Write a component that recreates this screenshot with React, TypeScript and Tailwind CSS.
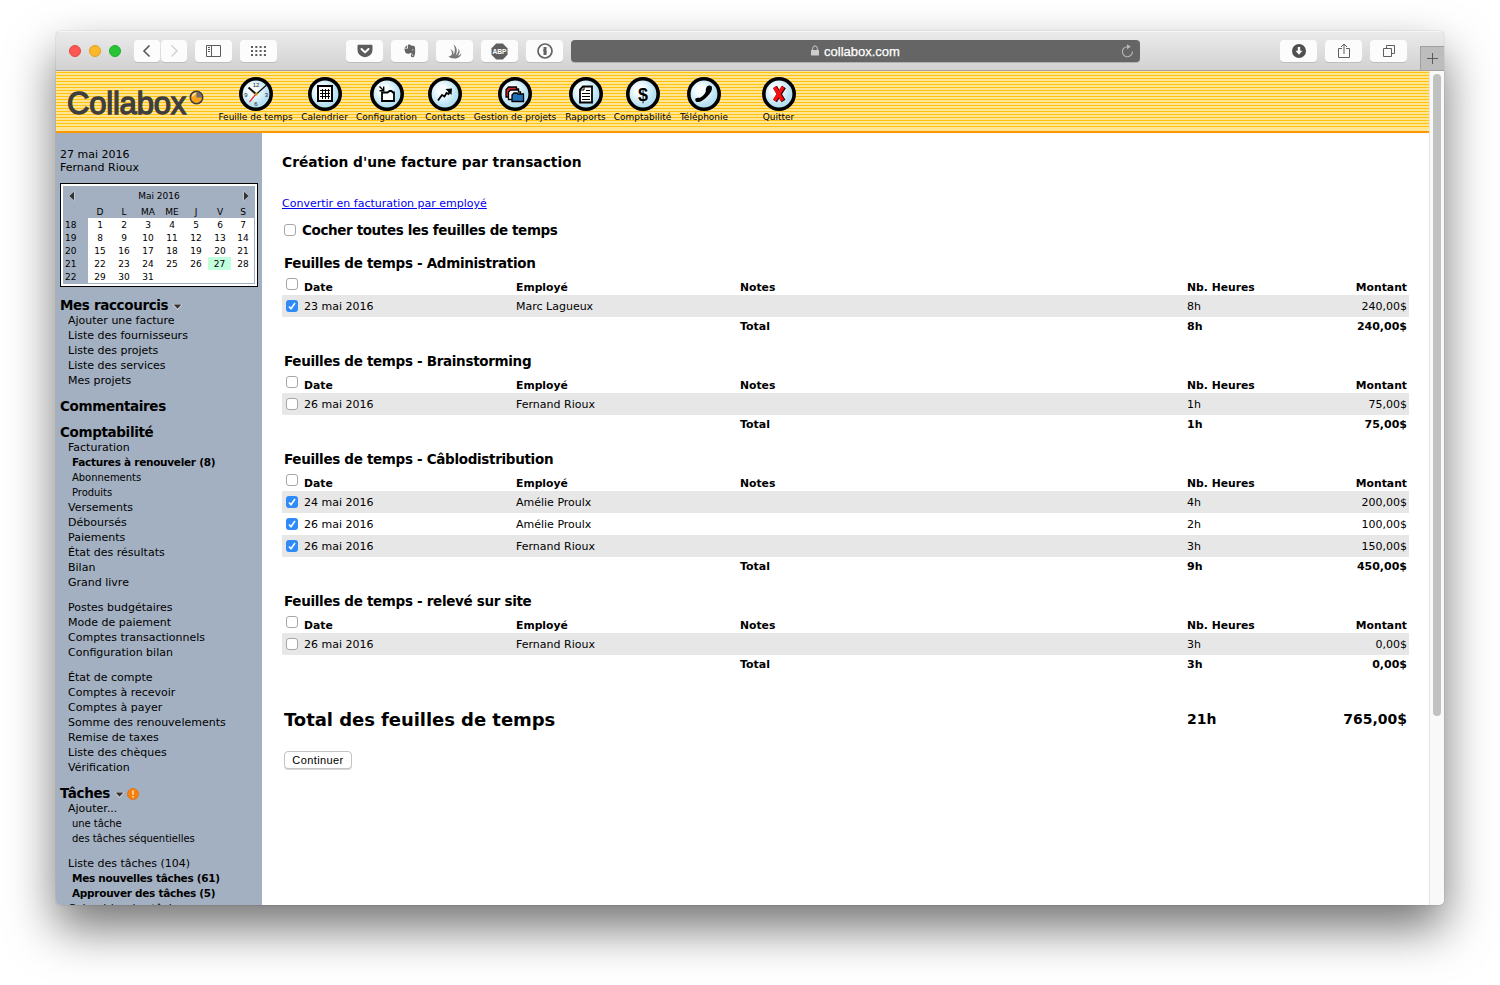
import { Fragment, ReactNode } from "react";

type SideItem = { label: string, level?: number, bold?: boolean, gap?: boolean }

type SideSection = { title: string, arrow?: boolean, alert?: boolean, items: SideItem[] }

type Entry = { date: string, employee: string, hours: string, amount: string, checked?: boolean }

type Sheet = { name: string, entries: Entry[], hours: string, amount: string }

const sections: SideSection[] = [
    {
        title: "Mes raccourcis", arrow: true, items: [
            { label: "Ajouter une facture" },
            { label: "Liste des fournisseurs" },
            { label: "Liste des projets" },
            { label: "Liste des services" },
            { label: "Mes projets" },
        ]
    },
    { title: "Commentaires", items: [] },
    {
        title: "Comptabilité", items: [
            { label: "Facturation" },
            { label: "Factures à renouveler (8)", level: 1, bold: true },
            { label: "Abonnements", level: 1 },
            { label: "Produits", level: 1 },
            { label: "Versements" },
            { label: "Déboursés" },
            { label: "Paiements" },
            { label: "État des résultats" },
            { label: "Bilan" },
            { label: "Grand livre" },
            { label: "Postes budgétaires", gap: true },
            { label: "Mode de paiement" },
            { label: "Comptes transactionnels" },
            { label: "Configuration bilan" },
            { label: "État de compte", gap: true },
            { label: "Comptes à recevoir" },
            { label: "Comptes à payer" },
            { label: "Somme des renouvelements" },
            { label: "Remise de taxes" },
            { label: "Liste des chèques" },
            { label: "Vérification" },
        ]
    },
    {
        title: "Tâches", arrow: true, alert: true, items: [
            { label: "Ajouter..." },
            { label: "une tâche", level: 1 },
            { label: "des tâches séquentielles", level: 1 },
            { label: "Liste des tâches (104)", gap: true },
            { label: "Mes nouvelles tâches (61)", level: 1, bold: true },
            { label: "Approuver des tâches (5)", level: 1, bold: true },
            { label: "Calendrier des tâches" },
        ]
    },
]

const sheets: Sheet[] = [
    {
        name: "Administration", hours: "8h", amount: "240,00$",
        entries: [{ date: "23 mai 2016", employee: "Marc Lagueux", hours: "8h", amount: "240,00$", checked: true }]
    },
    {
        name: "Brainstorming", hours: "1h", amount: "75,00$",
        entries: [{ date: "26 mai 2016", employee: "Fernand Rioux", hours: "1h", amount: "75,00$" }]
    },
    {
        name: "Câblodistribution", hours: "9h", amount: "450,00$",
        entries: [
            { date: "24 mai 2016", employee: "Amélie Proulx", hours: "4h", amount: "200,00$", checked: true },
            { date: "26 mai 2016", employee: "Amélie Proulx", hours: "2h", amount: "100,00$", checked: true },
            { date: "26 mai 2016", employee: "Fernand Rioux", hours: "3h", amount: "150,00$", checked: true },
        ]
    },
    {
        name: "relevé sur site", hours: "3h", amount: "0,00$",
        entries: [{ date: "26 mai 2016", employee: "Fernand Rioux", hours: "3h", amount: "0,00$" }]
    },
]

const weeks = [
    ["18", "1", "2", "3", "4", "5", "6", "7"],
    ["19", "8", "9", "10", "11", "12", "13", "14"],
    ["20", "15", "16", "17", "18", "19", "20", "21"],
    ["21", "22", "23", "24", "25", "26", "27", "28"],
    ["22", "29", "30", "31", "", "", "", ""],
]

const ToolButton = ({ className, children }: { className: string, children?: ReactNode }) => (
    <div className={`flex h-[22px] shrink-0 items-center justify-center rounded-[4px] bg-[#fcfcfc] shadow-[0_1px_0_#bdbdbd] ${className}`}>
        {children}
    </div>
)

const BrowserBar = () => (
    <div className="relative flex h-10 shrink-0 border-b border-[#a0a0a0] bg-linear-to-b from-[#ebebeb] to-[#d2d2d2] pt-[9px] shadow-[inset_0_1px_0_#f6f6f6]">
        <div className="ml-[13px] flex h-[22px] gap-2 items-center">
            <div className="size-3 rounded-full border border-[#e2463f] bg-[#fc5753]" />
            <div className="size-3 rounded-full border border-[#dfa023] bg-[#fdb827]" />
            <div className="size-3 rounded-full border border-[#1dad2b] bg-[#27c534]" />
        </div>
        <ToolButton className="ml-[13px] w-[26px]">
            <svg width="10" height="14" viewBox="0 0 10 14" fill="none" stroke="#555" strokeWidth="1.6"><path d="M7.5 1.5 2 7l5.5 5.5" /></svg>
        </ToolButton>
        <ToolButton className="ml-px w-[26px]">
            <svg width="10" height="14" viewBox="0 0 10 14" fill="none" stroke="#cfcfcf" strokeWidth="1.4"><path d="M2.5 1.5 8 7l-5.5 5.5" /></svg>
        </ToolButton>
        <ToolButton className="ml-2 w-[37px]">
            <svg width="15" height="12" viewBox="0 0 15 12" fill="none" stroke="#5a5a5a">
                <path d="M.5.5h14v11H.5zM5.5.5v11M2 2.500h2M2 4.500h2M2 6.500h2" />
            </svg>
        </ToolButton>
        <ToolButton className="ml-2 w-[37px]">
            <svg width="15" height="10" viewBox="0 0 15 10" fill="none" stroke="#5a5a5a" strokeWidth="2" strokeDasharray="2 2.300">
                <path d="M0 1h15M0 5h15M0 9h15" />
            </svg>
        </ToolButton>
        <ToolButton className="ml-[69px] w-[37px]">
            <svg width="16" height="14" viewBox="0 0 16 14">
                <path d="M1.6.8h12.8c.6 0 1.1.5 1.1 1.1V6a7.5 7.2 0 0 1-15 0V1.900c0-.6.5-1.100 1.100-1.100z" fill="#5c5c5c" />
                <path d="m4.500 5 3.500 3.400L11.500 5" fill="none" stroke="#fff" strokeWidth="2" strokeLinecap="round" strokeLinejoin="round" />
            </svg>
        </ToolButton>
        <ToolButton className="ml-2 w-[37px]">
            <svg width="12" height="14" viewBox="0 0 12 14" fill="#636363">
                <path d="M3.200 1v2.700H.5zM4 .8c1.500-.6 2.600 0 3 .6 2 .2 3.500.3 3.800 1.300.6 3 .6 7.300-.5 9.500-.5 1.200-2.500 1.200-3.200.4-.6-1-.3-2.400.8-2.700l.8.2v1.200c-.9 0-.7.7-.1.700 1 0 .9-2-.1-2.300-.9-.3-1.600-.2-1.900-.8-.8 1-3.500 1-4.600.3C1 8.200.4 5.400.5 4.500H4z" />
                <path d="M8 5.600c.9-.3 1.600.1 1.600.8-.5-.2-1-.3-1.600-.1z" fill="#fcfcfc" />
            </svg>
        </ToolButton>
        <ToolButton className="ml-2 w-[37px]">
            <svg width="14" height="15" viewBox="0 0 14 15" fill="#777">
                <path d="M.5 12C3 12.500 4 11 4 9 4 7 2.500 5.500 1.500 5 5 6 6 8 5.500 11 7 9 7.500 4 5.500.5 9.500 3 9.500 8 7.500 11.500 9.500 10 11 7.500 10.500 4.500c2 2.500 1 5.500-1 7.500 1.500-.5 3-1.500 4-3-.5 3-2.500 5.500-7 5.500C3.500 14.500 1.500 13.700.5 12z" />
            </svg>
        </ToolButton>
        <ToolButton className="ml-2 w-[37px]">
            <svg width="17" height="17" viewBox="0 0 17 17">
                <path d="M5.200.5h6.600l4.700 4.700v6.600l-4.700 4.700H5.200L.5 11.800V5.200z" fill="#5f5f5f" />
                <text x="8.500" y="11.400" textAnchor="middle" fill="#fff" fontSize="7.500" fontWeight="700" fontFamily="Liberation Sans, sans-serif" textLength="14" lengthAdjust="spacingAndGlyphs">ABP</text>
            </svg>
        </ToolButton>
        <ToolButton className="ml-2 w-[37px]">
            <svg width="16" height="16" viewBox="0 0 16 16" fill="none" stroke="#636363">
                <circle cx="8" cy="8" r="7" strokeWidth="1.700" />
                <path d="M8 4v8" strokeWidth="3" />
                <path d="M6 7.500h1M9 9h1" strokeWidth="1" />
            </svg>
        </ToolButton>
        <div className="relative ml-2 flex h-[22px] w-[569px] shrink-0 items-center justify-center gap-[5px] rounded-[4px] bg-[#656565] pt-px font-['Liberation_Sans',sans-serif] text-[13px] text-white shadow-[0_1px_0_#b0b0b0]">
            <svg className="-mt-0.5" width="8" height="11" viewBox="0 0 8 11"><path d="M0 5h8v5.500H0z" fill="#ccc" /><path d="M1.700 5V3.200a2.300 2.300 0 0 1 4.600 0V5" fill="none" stroke="#ccc" /></svg>
            <span className="[-webkit-text-stroke:0.250px_white]">collabox.com</span>
            <svg className="absolute right-1.5 top-[4px]" width="13" height="14" viewBox="0 0 13 14">
                <path d="M11.400 7.500A5 5 0 1 1 6.400 2.700" fill="none" stroke="#b9b9b9" strokeWidth="1.100" />
                <path d="M6 .3 9.800 2.800 6 5.200z" fill="#b9b9b9" />
            </svg>
        </div>
        <ToolButton className="ml-[140px] w-[37px]">
            <svg width="14" height="14" viewBox="0 0 14 14">
                <circle cx="7" cy="7" r="7" fill="#4f4f4f" />
                <path d="M5.800 3h2.400v3.700h2.300L7 10.700 3.500 6.700h2.300z" fill="#fff" />
            </svg>
        </ToolButton>
        <ToolButton className="ml-2 w-[37px]">
            <svg width="12" height="16" viewBox="0 0 12 16" fill="none" stroke="#5f5f5f">
                <path d="M4 5.500H.5v9h11v-9H8M6 11V1M3 4l3-3 3 3" />
            </svg>
        </ToolButton>
        <ToolButton className="ml-2 w-[37px]">
            <svg width="12" height="12" viewBox="0 0 12 12" fill="none" stroke="#5f5f5f">
                <path d="M.5 3.500h8v8h-8zM3.500 3.500v-3h8v8h-3" />
            </svg>
        </ToolButton>
        <div className="absolute bottom-[-1px] right-0 flex h-[25px] w-6 items-center justify-center border-l border-y border-[#a0a0a0] bg-[#bdbdbd]">
            <svg width="11" height="11" viewBox="0 0 11 11" stroke="#5a5a5a"><path d="M5.500 0v11M0 5.500h11" /></svg>
        </div>
    </div>
)

const Disc = ({ children }: { children: ReactNode }) => (
    <svg className="shrink-0" width="34" height="34" viewBox="0 0 34 34">
        <defs>
            <radialGradient id="disc" cx="40%" cy="38%">
                <stop offset="0.300" stopColor="#f8fdff" />
                <stop offset="1" stopColor="#b5e1f3" />
            </radialGradient>
        </defs>
        <circle cx="17" cy="17" r="15.200" fill="url(#disc)" stroke="#000" strokeWidth="3.600" />
        {children}
    </svg>
)

const menu = [
    {
        label: "Feuille de temps", width: "w-[75px]", icon: <>
            <g fontSize="6" fill="#222" fontFamily="Liberation Sans, sans-serif" textAnchor="middle">
                <text x="17" y="10">12</text><text x="27.500" y="19.500">3</text><text x="17" y="29">6</text><text x="6.800" y="19.500">9</text>
            </g>
            <path d="M17 17 10.500 25" stroke="#e33" strokeWidth="1.300" />
            <path d="M17.500 17.500 9.500 10.500" stroke="#111" strokeWidth="2" />
            <path d="M17 17.500 27.500 8" stroke="#111" strokeWidth="1.200" />
            <circle cx="17.300" cy="17" r="1.500" fill="#c90" />
        </>
    },
    {
        label: "Calendrier", width: "w-[47px]", icon: <>
            <path d="M10 9h14v15H10z" fill="#fff" stroke="#000" strokeWidth="2" />
            <path d="M14.500 12v10M17.500 12v10M20.500 12v10M12 13.500h10M12 16.500h10M12 19.500h10" fill="none" stroke="#000" />
        </>
    },
    {
        label: "Configuration", width: "w-[61px]", icon: <>
            <path d="M12 15.500h5.500l2-1.500h2l1.500 1.500h1V24H12z" fill="#fff" stroke="#000" strokeWidth="1.800" />
            <path d="m9.500 9.500 4 4M13.700 9.500v4.300h-4.200" fill="none" stroke="#000" strokeWidth="1.400" />
        </>
    },
    {
        label: "Contacts", width: "w-[40px]", icon: <>
            <path d="m10 23.500 4-5.500 2.500 1.500 2-3.500 2 1 2-4" fill="none" stroke="#000" strokeWidth="1.800" />
            <path d="m17.500 12 6.500-.5-.5 6.500z" />
        </>
    },
    {
        label: "Gestion de projets", width: "w-[84px]", icon: <>
            <path d="M8 20V12.500l2.500-2.500h8v2h2v8z" fill="#d9262e" stroke="#000" strokeWidth="1.300" />
            <path d="M10.500 22.500V15l2-2h8v2h2v7.500z" fill="#fff" stroke="#000" strokeWidth="1.300" />
            <path d="M14 24.500V18l2-2h3l1 1h5.500v7.500z" fill="#2272b9" stroke="#000" strokeWidth="1.300" />
        </>
    },
    {
        label: "Rapports", width: "w-[41px]", icon: <>
            <path d="M14 9.500h9v16H11v-13z" fill="#fff" stroke="#000" strokeWidth="1.800" />
            <path d="M15 9v4h-4M13 16.500h8M13 19.500h8M13 22.500h8M17 13.500h4" fill="none" stroke="#000" />
        </>
    },
    {
        label: "Comptabilité", width: "w-[57px]", icon: <text x="17" y="23.500" textAnchor="middle" fontSize="18" fontWeight="700" fontFamily="Liberation Sans, sans-serif">$</text>
    },
    {
        label: "Téléphonie", width: "w-[50px]", icon: <path d="M8.500 21.500c.8-1 3.500-.8 4.500-.8 2-.8 5-3.600 5.800-6-.3-2 .2-4 1.400-5.500 1.300-1.200 3.300-.8 4.400 0 .8 1.500.3 4-.6 5.500-2 3.500-5.500 6.800-9 9-1.500 1-4.500 1.600-5.800 1-.9-.6-1.200-2.300-.7-3.200z" />
    },
]

const Quit = () => (
    <div className="flex w-[33px] flex-col items-center ml-[25px]">
        <Disc>
            <g stroke="#300" strokeWidth="4.500"><path d="m13 10 8.500 14M22 10l-9 14" /></g>
            <g stroke="#f41010" strokeWidth="3.500"><path d="m12.500 10 8 13.500M21 10l-8.500 13.500" /></g>
        </Disc>
        <span className="whitespace-nowrap text-[9px] leading-3">Quitter</span>
    </div>
)

const Header = () => (
    <div className="flex h-[62px] shrink-0 border-b-2 border-[#ff9800] bg-[#ffe594] bg-[repeating-linear-gradient(to_bottom,#ffe594_0px,#ffe594_1px,#ffc20e_1px,#ffc20e_2px,#ffe594_2px,#ffe594_3px)] bg-[length:100%_57px] bg-no-repeat">
        <div className="flex w-[162px] shrink-0 pl-[11px] pt-[14px]">
            <span className="w-[119px] font-['Liberation_Sans',sans-serif] text-[31px] leading-[38px] text-[#3e3e3e] tracking-[-0.200px] [-webkit-text-stroke:1.300px_#3e3e3e]">Collabox</span>
            <svg className="ml-[3px] mt-[5px]" width="15" height="15" viewBox="0 0 15 15">
                <circle cx="7.500" cy="7.500" r="6.200" fill="#f9a11b" stroke="#3e3e3e" strokeWidth="1.600" />
                <path d="M7.500 7.500V2a5.500 5.500 0 0 1 5.500 5.500z" fill="#6b6b6b" />
                <path d="M3.500 6.500a4 4 0 0 1 3.500-3" fill="none" stroke="#ffe0a0" strokeWidth="1.500" />
            </svg>
        </div>
        <div className="flex gap-2 pt-1.5">
            {menu.map(item => (
                <div key={item.label} className={`flex flex-col items-center ${item.width}`}>
                    <Disc>{item.icon}</Disc>
                    <span className="whitespace-nowrap text-[9px] leading-3">{item.label}</span>
                </div>
            ))}
            <Quit />
        </div>
    </div>
)

const MiniCalendar = () => (
    <div className="mt-[9px] ml-1 h-[104px] w-[198px] border border-black bg-white p-0.5 text-[9px]">
        <div className="h-[98px] w-[192px] bg-[#a3b0c1]">
            <div className="flex h-[19px] items-center justify-between px-[6px] pt-px">
                <svg width="6" height="10" viewBox="0 0 6 10"><path d="M5.500 0v10L0 5z" fill="#ddd" /><path d="M5 .8v8.400L.3 5z" fill="#333" /></svg>
                <span className="pt-0.5">Mai 2016</span>
                <svg width="6" height="10" viewBox="0 0 6 10"><path d="M.5 0v10L6 5z" fill="#ddd" /><path d="M1 .8v8.400L5.700 5z" fill="#333" /></svg>
            </div>
            <div className="grid grid-cols-[25px_repeat(6,24px)_22px] text-center leading-[15px]">
                {["", "D", "L", "MA", "ME", "J", "V", "S"].map((d, i) => <span key={i} className="h-[13px]">{d}</span>)}
                {weeks.map(week => (
                    <Fragment key={week[0]}>
                        {week.map((day, i) => (
                            <span
                                key={i}
                                className={i == 0 ? "h-[13px] pl-0.5 text-left" : day == "27" ? "h-[13px] border-r border-white bg-[#c1ffdd]" : "h-[13px] bg-white"}
                            >
                                {day}
                            </span>
                        ))}
                    </Fragment>
                ))}
            </div>
        </div>
    </div>
)

const itemStyle = (item: SideItem) => {
    if (item.bold) return "pl-4 text-[10.500px] font-bold tracking-[-0.280px]"
    if (item.level) return "pl-4 text-[10px] tracking-[-0.040px]"
    return "pl-3 text-[11px]"
}

const Sidebar = () => (
    <div className="w-[206px] shrink-0 overflow-hidden bg-[#a3b0c1]">
        <div className="pt-[15px] pl-1 text-[11px] leading-[13px]">
            <p>27 mai 2016</p>
            <p>Fernand Rioux</p>
        </div>
        <MiniCalendar />
        {sections.map(section => (
            <div key={section.title} className="mt-[11px] whitespace-nowrap leading-[15px]">
                <div className="flex h-[15px] items-center pl-1">
                    <h2 className="text-[13.500px] font-bold tracking-[-0.360px]">{section.title}</h2>
                    {section.arrow && (
                        <svg className="ml-[5px] mt-0.5" width="9" height="6" viewBox="0 0 9 6">
                            <path d="M0 0h9v1L4.500 6 0 1z" fill="#ddd" />
                            <path d="M.5.5h8l-4 4.200z" fill="#333" />
                        </svg>
                    )}
                    {section.alert && (
                        <svg className="ml-[3px] mt-px" width="12" height="12" viewBox="0 0 12 12">
                            <circle cx="6" cy="6" r="5.600" fill="#f77f0e" stroke="#e0690a" strokeWidth=".6" />
                            <path d="M6 2.500v4.300M6 8v1.600" stroke="#ffe9c9" strokeWidth="1.500" />
                        </svg>
                    )}
                </div>
                {section.items.map(item => (
                    <p key={item.label} className={`h-[15px] ${itemStyle(item)} ${item.gap ? "mt-2.5" : ""}`}>{item.label}</p>
                ))}
            </div>
        ))}
    </div>
)

const Check = ({ checked }: { checked?: boolean }) => checked ? (
    <span className="flex size-3 items-center justify-center rounded-[3px] bg-[#2f8bf8]">
        <svg width="8" height="8" viewBox="0 0 8 8" fill="none" stroke="#fff" strokeWidth="1.500"><path d="m1 4.500 2 2.200L7 1" /></svg>
    </span>
) : <span className="block size-3 rounded-[3px] border border-[#a6a6a6] bg-white" />

const row = "grid grid-cols-[22px_212px_224px_447px_222px]"

const SheetTable = ({ sheet }: { sheet: Sheet }) => (
    <div className="mb-4 text-[11px]">
        <h3 className="h-5 pl-0.5 text-[13.500px] font-bold leading-5 tracking-[-0.320px]">Feuilles de temps - {sheet.name}</h3>
        <div className={`${row} h-[22px] pt-[7px] font-bold leading-4 text-[10.800px]`}>
            <span className="-mt-0.5 pl-1"><Check /></span>
            <span>Date</span>
            <span>Employé</span>
            <span>Notes</span>
            <span className="flex justify-between pr-0.5"><span>Nb. Heures</span><span>Montant</span></span>
        </div>
        {sheet.entries.map((e, i) => (
            <div key={i} className={`${row} h-[22px] leading-[23px] ${i % 2 == 0 ? "bg-[#e7e7e7]" : ""}`}>
                <span className="pl-1 pt-[5px]"><Check checked={e.checked} /></span>
                <span>{e.date}</span>
                <span>{e.employee}</span>
                <span className="col-start-5 flex justify-between pr-0.5"><span>{e.hours}</span><span>{e.amount}</span></span>
            </div>
        ))}
        <div className={`${row} h-[18px] text-[11px] font-bold leading-5`}>
            <span className="col-start-4">Total</span>
            <span className="col-start-5 flex justify-between pr-0.5"><span>{sheet.hours}</span><span>{sheet.amount}</span></span>
        </div>
    </div>
)

const Invoice = () => (
    <div className="flex-1 bg-white pl-5 pt-[19px]">
        <h1 className="text-[13.800px] font-bold leading-5">Création d'une facture par transaction</h1>
        <a href="#" className="mt-6 block text-[11px] leading-4 text-[#0000ee] underline">Convertir en facturation par employé</a>
        <label className="mt-2 flex h-5 items-center gap-[6px] pl-0.5 text-[13.500px] font-bold tracking-[-0.380px]">
            <Check />
            Cocher toutes les feuilles de temps
        </label>
        <div className="mt-[13px] w-[1127px]">
            {sheets.map(sheet => <SheetTable key={sheet.name} sheet={sheet} />)}
            <div className={`${row} mt-[31px] h-[30px] items-center font-bold`}>
                <span className="col-span-4 pl-0.5 text-[18px] tracking-[-0.050px]">Total des feuilles de temps</span>
                <span className="col-start-5 flex justify-between pr-0.5 text-[14px]"><span>21h</span><span>765,00$</span></span>
            </div>
        </div>
        <button className="ml-0.5 mt-[17px] flex h-[18px] w-[68px] items-center justify-center rounded-[4px] border border-[#c4c4c4] bg-white font-['Liberation_Sans',sans-serif] text-[11px] tracking-[0.400px] shadow-[0_1px_0_#d8d8d8]">Continuer</button>
    </div>
)

const App = () => {
    return <div className="h-[985px] w-[1500px] overflow-hidden bg-white pl-[56px] pt-[31px] font-['DejaVu_Sans',Verdana,sans-serif] text-black">
        <div className="flex h-[874px] w-[1388px] rounded-[5px] shadow-[0_0_1px_rgba(0,0,0,0.5),0_23px_48px_rgba(0,0,0,0.55)]">
            <div className="flex w-full flex-col overflow-hidden rounded-[5px]">
                <BrowserBar />
                <div className="flex min-h-0 flex-1">
                    <div className="flex min-w-0 flex-1 flex-col">
                        <Header />
                        <div className="flex min-h-0 flex-1">
                            <Sidebar />
                            <Invoice />
                        </div>
                    </div>
                    <div className="w-[15px] shrink-0 border-l border-[#e4e4e4] bg-[#f9f9f9] pt-[3px] pl-[3px]">
                        <div className="h-[642px] w-2 rounded-full bg-[#c1c1c1]" />
                    </div>
                </div>
            </div>
        </div>
    </div>
}

export default App
